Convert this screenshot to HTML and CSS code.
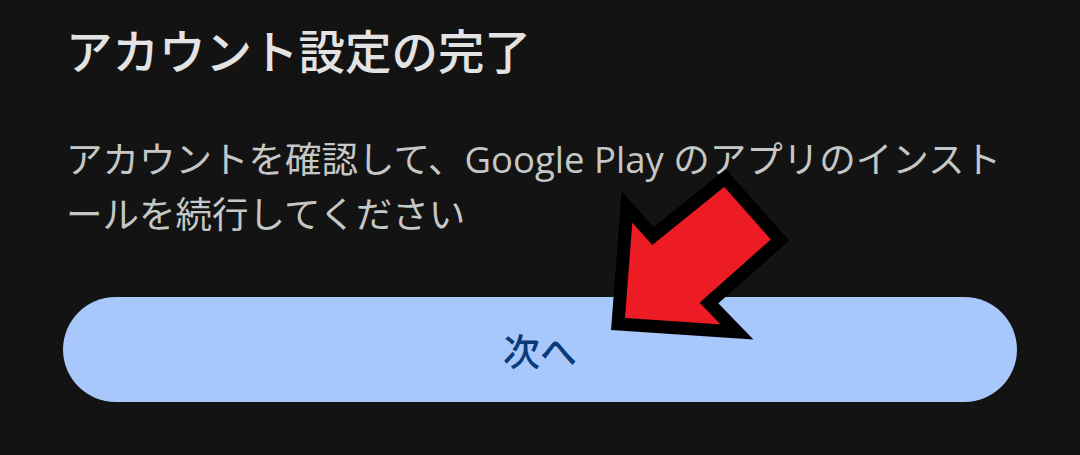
FILE: index.html
```html
<!DOCTYPE html>
<html lang="ja">
<head>
    <meta charset="UTF-8">
    <meta name="viewport" content="width=device-width, initial-scale=1.0">
    <title>アカウント設定の完了</title>
    <link rel="stylesheet" href="styles.css">
</head>
<body>
    <div class="sheet">
        <h1 class="title">アカウント設定の完了</h1>
        <p class="desc">アカウントを確認して、Google Play のアプリのインストールを続行してください</p>
        <button class="next">次へ</button>
    </div>
    <svg class="arrow" width="1080" height="455" viewBox="0 0 1080 455">
        <polygon points="725,178 780,240 709,303 737,332 618,324 627,207 653,236"
                 fill="#ed1c24" stroke="#000" stroke-width="13" stroke-linejoin="miter"/>
    </svg>
</body>
</html>
```
FILE: styles.css
```css
body { margin: 0; background-color: #131313; font-family: "Roboto", "Noto Sans CJK JP", sans-serif; overflow: hidden; }
.sheet { padding: 20px 63px 0 63px; width: 954px; }
.title { margin: 0 0 0 3px; font-size: 46.5px; font-weight: 500; line-height: 66px; color: #e3e3e3; }
.desc { margin: 46px 0 0 3px; font-family: "Open Sans", "Noto Sans CJK JP", sans-serif; font-size: 36.5px; font-weight: 400; line-height: 55px; color: #c4c7c5; line-break: loose; }
.next { display: block; margin-top: 55px; width: 954px; height: 105px; border: none; border-radius: 53px; background-color: #a8c7fa; color: #0a3a7a; font-family: "Roboto", "Noto Sans CJK JP", sans-serif; font-size: 37px; font-weight: 500; padding: 0; }
.arrow { position: absolute; left: 0; top: 0; }
```
